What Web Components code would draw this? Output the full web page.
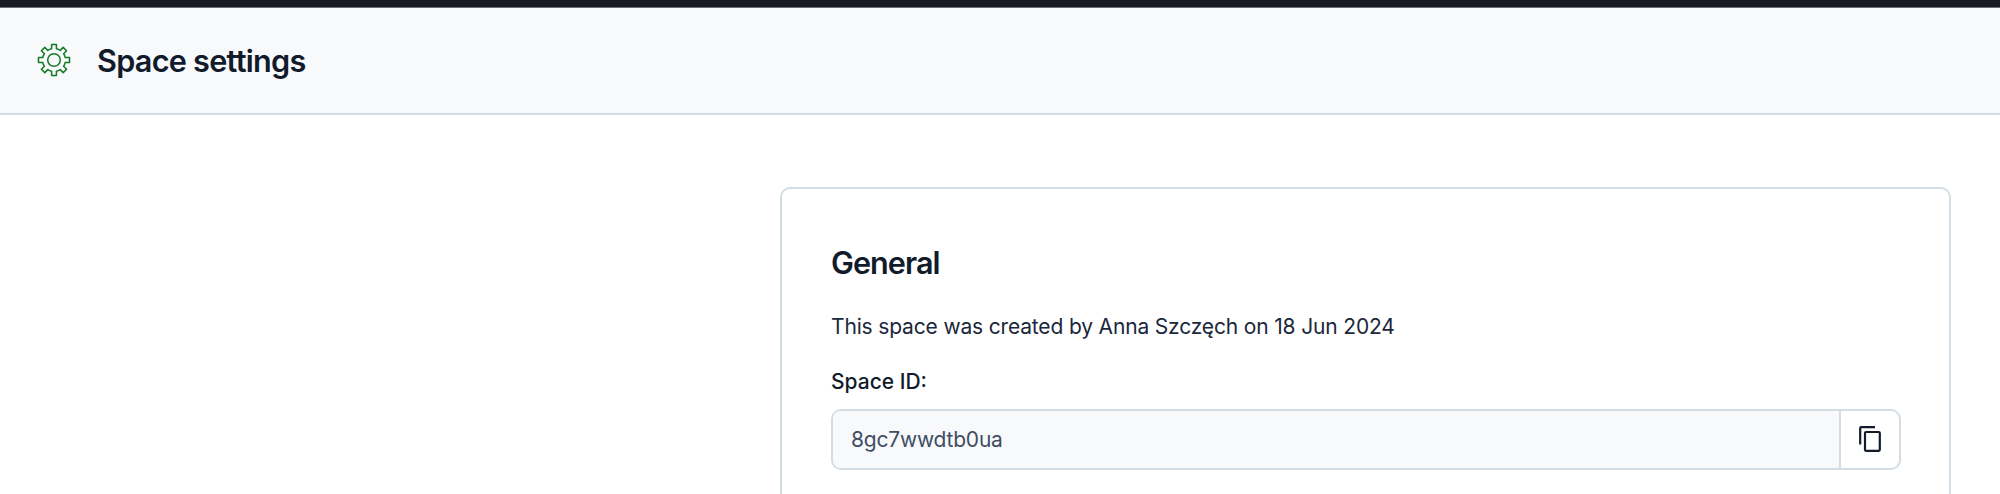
<!DOCTYPE html>
<html lang="en">
<head>
<meta charset="utf-8">
<title>Space settings</title>
<style>
html,body{margin:0;height:100%;overflow:hidden;background:#fff}
body{font-family:Inter,"Liberation Sans",sans-serif;color:#111b2b;--line:#d3dde4;--soft:#f7f9fb}
</style>
</head>
<body>
<settings-page>
  <page-header slot="header"><gear-icon slot="icon"></gear-icon>Space settings</page-header>
  <settings-card heading="General">
    <card-text>This space was created by Anna Szczęch on 18 Jun 2024</card-text>
    <copy-field label="Space ID:" value="8gc7wwdtb0ua"></copy-field>
  </settings-card>
</settings-page>
<script>
const define = (name, markup) => customElements.define(name, class extends HTMLElement {
  constructor() {
    super();
    const t = document.createElement('template');
    t.innerHTML = markup;
    this.attachShadow({ mode: 'open' }).append(t.content.cloneNode(true));
    this.shadowRoot.querySelectorAll('[data-attr]').forEach(n => {
      n.textContent = this.getAttribute(n.dataset.attr) || '';
    });
  }
});

define('settings-page', `<style>
:host{display:flex;flex-direction:column;height:494px;overflow:hidden}
.bar{height:7px;flex:none;background:#181b24;border-bottom:1px solid #6b6e74;box-sizing:content-box}
main{display:flex;justify-content:flex-end;padding:72px 49px 0 0}
</style><div class="bar"></div><slot name="header"></slot><main><slot></slot></main>`);

define('page-header', `<style>
:host{display:flex;align-items:center;height:107px;box-sizing:border-box;flex:none;padding-left:36px;gap:25px;background:var(--soft);border-bottom:2px solid var(--line)}
h1{margin:0;font-size:30.6px;line-height:40px;font-weight:600;letter-spacing:-.73px}
</style><slot name="icon"></slot><h1><slot></slot></h1>`);

define('gear-icon', `<style>:host{display:block;width:36px;height:36px;margin-bottom:2px}svg{display:block}</style>
<svg width="36" height="36" viewBox="-18 -18 36 36" fill="none" stroke="#137a22" stroke-width="1.5" stroke-linejoin="round">
<path d="M-2.4-11.2V-15.5H2.4V-11.2Q4.7-10.8 6.2-9.6L9.2-12.6L12.6-9.2L9.6-6.2Q10.8-4.7 11.2-2.4H15.5V2.4H11.2Q10.8 4.7 9.6 6.2L12.6 9.2L9.2 12.6L6.2 9.6Q4.7 10.8 2.4 11.2V15.5H-2.4V11.2Q-4.7 10.8-6.2 9.6L-9.2 12.6L-12.6 9.2L-9.6 6.2Q-10.8 4.7-11.2 2.4H-15.5V-2.4H-11.2Q-10.8-4.7-9.6-6.2L-12.6-9.2L-9.2-12.6L-6.2-9.6Q-4.7-10.8-2.4-11.2Z"/><circle r="6.3"/></svg>`);

define('settings-card', `<style>
:host{display:block;box-sizing:border-box;width:1171px;height:400px;flex:none;padding:54px 48px 0 49px;border:2px solid var(--line);border-radius:10px}
h2{margin:0 0 28px;font-size:30.6px;line-height:40px;font-weight:600;letter-spacing:-.95px}
</style><h2 data-attr="heading"></h2><slot></slot>`);

define('card-text', `<style>
:host{display:block;font-size:21px;line-height:32px;color:#1b273a;margin-bottom:23px;letter-spacing:-.16px}
</style><slot></slot>`);

define('copy-field', `<style>
:host{display:block;font-size:21px}
.label{font-weight:500;line-height:32px;margin-bottom:11px}
.box{display:flex;box-sizing:border-box;height:61px;border:2px solid var(--line);border-radius:10px;overflow:hidden}
.value{flex:1;display:flex;align-items:center;padding-left:18px;background:var(--soft);color:#414d63;letter-spacing:-.2px;border-right:2px solid var(--line)}
.copy{display:flex;align-items:center;justify-content:center;width:58px}
</style><div class="label" data-attr="label"></div><div class="box"><div class="value"><span data-attr="value"></span></div><div class="copy"><copy-icon></copy-icon></div></div>`);

define('copy-icon', `<style>:host{display:block;margin-bottom:1px}svg{display:block}</style>
<svg width="22" height="26" viewBox="0 0 22 26" fill="none" stroke="#111b2b" stroke-width="2.2"><path d="M1.2 18.5V2.2Q1.2 1.2 2.2 1.2H16"/><rect x="6" y="6" width="14.8" height="18.8" rx="1"/></svg>`);
</script>
</body>
</html>
